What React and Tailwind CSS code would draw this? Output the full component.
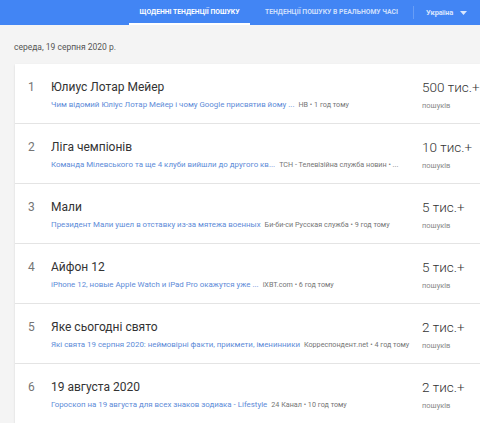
const items = [
  {
    title: 'Юлиус Лотар Мейер',
    link: 'Чим відомий Юліус Лотар Мейер і чому Google присвятив йому ...',
    source: 'НВ • 1 год тому',
    count: '500 тис.+',
  },
  {
    title: 'Ліга чемпіонів',
    link: 'Команда Мілевського та ще 4 клуби вийшли до другого кв...',
    source: 'ТСН - Телевізійна служба новин • ...',
    count: '10 тис.+',
  },
  {
    title: 'Мали',
    link: 'Президент Мали ушел в отставку из-за мятежа военных',
    source: 'Би-би-си Русская служба • 9 год тому',
    count: '5 тис.+',
  },
  {
    title: 'Айфон 12',
    link: 'iPhone 12, новые Apple Watch и iPad Pro окажутся уже ...',
    source: 'iXBT.com • 6 год тому',
    count: '5 тис.+',
  },
  {
    title: 'Яке сьогодні свято',
    link: 'Які свята 19 серпня 2020: неймовірні факти, прикмети, іменинники',
    source: 'Корреспондент.net • 4 год тому',
    count: '2 тис.+',
  },
  {
    title: '19 августа 2020',
    link: 'Гороскоп на 19 августа для всех знаков зодиака - Lifestyle',
    source: '24 Канал • 10 год тому',
    count: '2 тис.+',
  },
]

function Header() {
  return (
    <div className="h-[25px] bg-[#4285f4] flex items-stretch text-[6.8px] font-bold uppercase">
      <div className="w-[129px]" />
      <div className="w-[121px] flex items-center justify-center text-white border-b-[2px] border-white pt-[2px]">
        Щоденні тенденції пошуку
      </div>
      <div className="w-[163px] flex items-center justify-center text-white/75">
        Тенденції пошуку в реальному часі
      </div>
      <div className="w-px my-[6px] bg-white/20" />
      <div className="flex items-center pl-[12px] text-white/80 text-[7.5px] normal-case gap-[7px]">
        Україна
        <svg width="7" height="4" viewBox="0 0 7 4"><path d="M0 0h7L3.5 4z" fill="currentColor" /></svg>
      </div>
    </div>
  )
}

function Row({ item, rank, last }) {
  return (
    <div className={'flex h-[60px] pt-[15px] ' + (last ? '' : 'border-b border-[#e4e4e4]')}>
      <div className="w-[36px] pl-[13px] text-[12px] leading-[16px] text-[#757575]">{rank}</div>
      <div className="flex-1 min-w-0 overflow-hidden">
        <div className="text-[12px] leading-[16px] text-[#333]">{item.title}</div>
        <div className="mt-[4px] text-[7.9px] leading-[12px] whitespace-nowrap overflow-hidden">
          <span className="text-[#5d8bd8]">{item.link}</span>
          <span className="text-[#757575] text-[7.2px] ml-[4px]">{item.source}</span>
        </div>
      </div>
      <div className="w-[58px] shrink-0">
        <div className="text-[13.5px] font-light leading-[16px] text-[#333] whitespace-nowrap">{item.count}</div>
        <div className="mt-[5px] text-[7.5px] leading-[12px] text-[#888]">пошуків</div>
      </div>
    </div>
  )
}

export default function App() {
  return (
    <div className="w-[480px] h-[423px] overflow-hidden bg-[#f4f4f4]" style={{ fontFamily: 'Roboto, "Noto Sans", sans-serif' }}>
      <Header />
      <div className="h-[39px] pl-[14px] pt-[16px] text-[8.5px] leading-[12px] text-[#555]">середа, 19 серпня 2020 р.</div>
      <div className="ml-[15px] w-[465px] bg-white shadow-[0_1px_2px_rgba(0,0,0,0.12)]">
        {items.map((item, i) => (
          <Row key={i} item={item} rank={i + 1} last={i === items.length - 1} />
        ))}
      </div>
    </div>
  )
}
